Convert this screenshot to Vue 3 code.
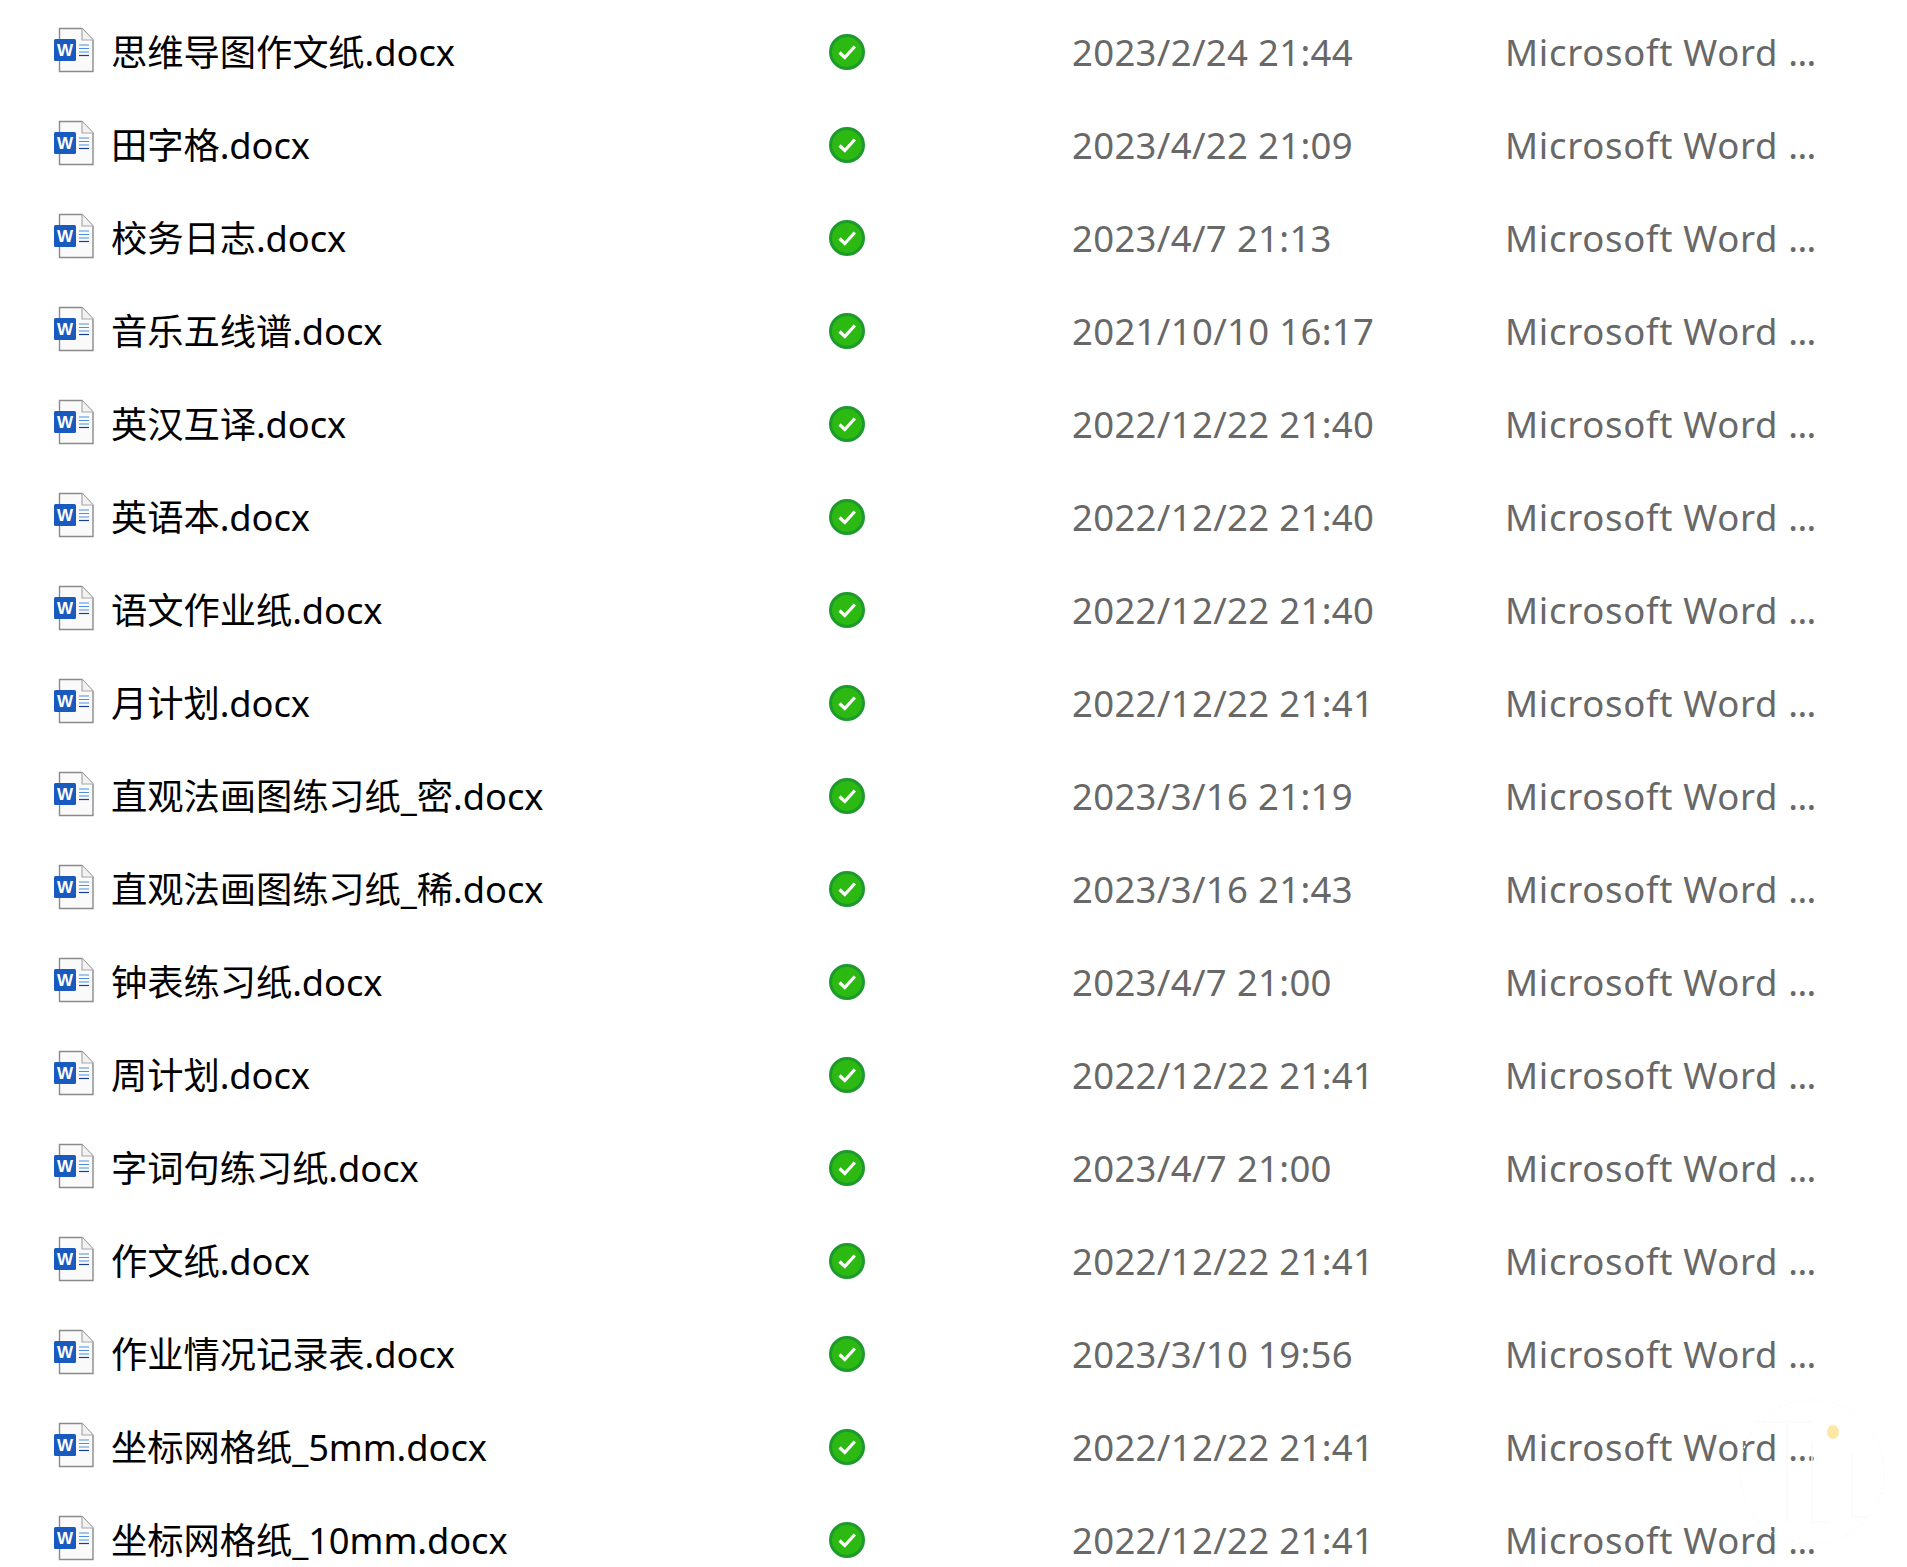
<script setup>
const rows = [
  ['思维导图作文纸.docx', '2023/2/24 21:44'],
  ['田字格.docx', '2023/4/22 21:09'],
  ['校务日志.docx', '2023/4/7 21:13'],
  ['音乐五线谱.docx', '2021/10/10 16:17'],
  ['英汉互译.docx', '2022/12/22 21:40'],
  ['英语本.docx', '2022/12/22 21:40'],
  ['语文作业纸.docx', '2022/12/22 21:40'],
  ['月计划.docx', '2022/12/22 21:41'],
  ['直观法画图练习纸_密.docx', '2023/3/16 21:19'],
  ['直观法画图练习纸_稀.docx', '2023/3/16 21:43'],
  ['钟表练习纸.docx', '2023/4/7 21:00'],
  ['周计划.docx', '2022/12/22 21:41'],
  ['字词句练习纸.docx', '2023/4/7 21:00'],
  ['作文纸.docx', '2022/12/22 21:41'],
  ['作业情况记录表.docx', '2023/3/10 19:56'],
  ['坐标网格纸_5mm.docx', '2022/12/22 21:41'],
  ['坐标网格纸_10mm.docx', '2022/12/22 21:41'],
]
</script>

<template>
  <div class="page">
    <div class="list">
      <div v-for="r in rows" :key="r[0]" class="row">
        <div class="name-cell">
          <svg class="file" width="42" height="46" viewBox="0 0 42 46">
            <path d="M6.5 1.5H29L40 13V44.5H6.5Z" fill="#fafafa" stroke="#8a8a8a" stroke-width="1.4" />
            <path d="M29 1.5V13H40" fill="#f2f2f2" stroke="#a8a8a8" stroke-width="1.2" />
            <rect x="1" y="12" width="22" height="22" rx="1.5" fill="#185abd" />
            <path d="M26 18h10M26 21.5h10M26 25h10" stroke="#4a8fe0" stroke-width="1.2" />
            <path d="M26 28.500h10" stroke="#1b3f8f" stroke-width="1.2" />
            <text x="12" y="29" text-anchor="middle" class="w">W</text>
          </svg>
          <span class="name">{{ r[0] }}</span>
        </div>
        <div class="status-cell">
          <svg width="36" height="36" viewBox="0 0 36 36">
            <circle cx="18" cy="18" r="16.500" fill="#2cb912" stroke="#1d9a2c" stroke-width="3" />
            <path d="M10.500 18.500L15.800 23.500L25.800 12.500" fill="none" stroke="#fff" stroke-width="3.200" />
          </svg>
        </div>
        <div class="date">{{ r[1] }}</div>
        <div class="type">Microsoft Word <span class="dots">...</span></div>
      </div>
    </div>
    <svg class="mark" width="150" height="160" viewBox="0 0 150 160">
      <circle cx="75" cy="80" r="72" fill="none" stroke="#fbfbfb" stroke-width="1.500" stroke-dasharray="3 2" />
      <path d="M20 30H75M50 30V130M75 50V130H90M115 60V125H130" fill="none" stroke="#fafafa" stroke-width="1.500" />
    </svg>
    <div class="dot"></div>
  </div>
</template>

<style scoped>
.page {
  position: relative;
  width: 1907px;
  height: 1567px;
  overflow: hidden;
  background: #fff;
  font-family: "Noto Sans", "Noto Sans CJK SC", sans-serif;
}
.list {
  display: flex;
  flex-direction: column;
  padding-top: 5px;
}
.row {
  display: flex;
  align-items: center;
  height: 93px;
  flex: none;
}
.name-cell {
  display: flex;
  align-items: center;
  width: 829px;
  padding-left: 53px;
  box-sizing: border-box;
  gap: 16px;
  flex: none;
}
.file {
  flex: none;
  margin-bottom: 4px;
}
.w {
  font: 700 17px "Liberation Sans", sans-serif;
  fill: #fff;
}
.name {
  font-size: 36.3px;
  line-height: 48px;
  color: #000;
  white-space: nowrap;
  letter-spacing: -0.07px;
}
.status-cell {
  display: flex;
  width: 243px;
  flex: none;
}
.date,
.type {
  font-size: 36.5px;
  line-height: 48px;
  color: #686868;
  white-space: nowrap;
}
.date {
  width: 433px;
  flex: none;
  letter-spacing: 0.33px;
}
.type {
  letter-spacing: 0.7px;
}
.dots {
  letter-spacing: -0.7px;
}
.mark {
  position: absolute;
  right: 20px;
  bottom: 15px;
  pointer-events: none;
}
.dot {
  position: absolute;
  left: 1827px;
  top: 1425px;
  width: 12px;
  height: 14px;
  border-radius: 50%;
  background: #fde6a6;
}
</style>
